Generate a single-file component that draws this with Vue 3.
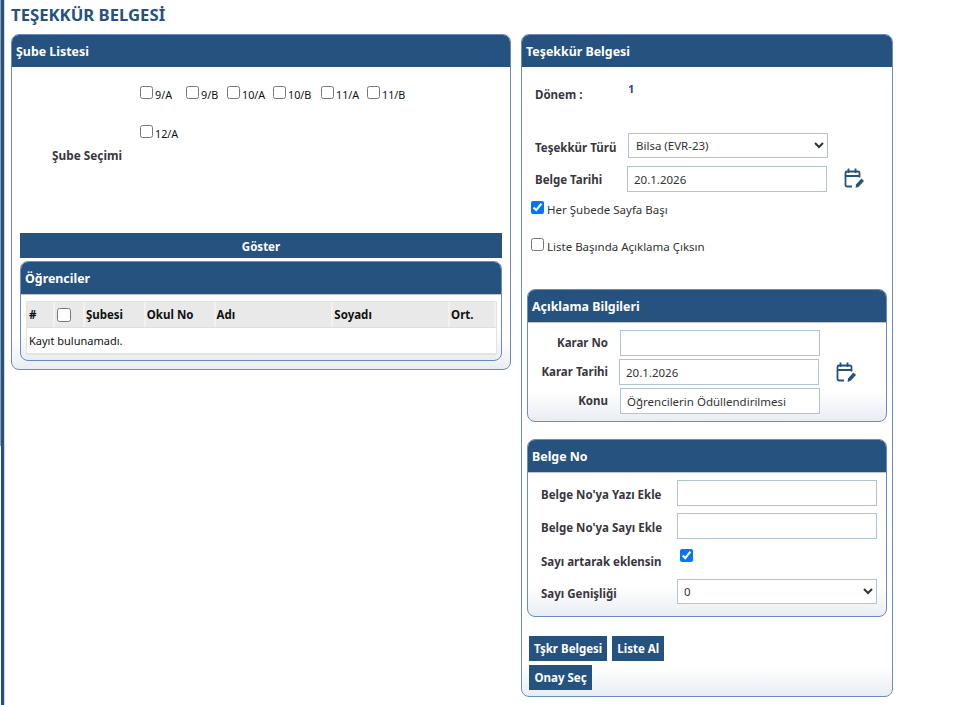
<script setup>
const row1 = [
  { name: '9/A', w: 46 },
  { name: '9/B', w: 41 },
  { name: '10/A', w: 46 },
  { name: '10/B', w: 48 },
  { name: '11/A', w: 46 },
  { name: '11/B', w: 46 }
]
const columns = [
  { name: 'Şubesi', w: 61 },
  { name: 'Okul No', w: 70 },
  { name: 'Adı', w: 118 },
  { name: 'Soyadı', w: 117 },
  { name: 'Ort.', w: 46 }
]
</script>

<template>
  <div class="shell">
    <div class="page">
      <h1 class="title">TEŞEKKÜR BELGESİ</h1>
      <div class="columns">
        <section class="panel left">
          <header class="head">Şube Listesi</header>
          <div class="branch">
            <div class="branch-label">Şube Seçimi</div>
            <div class="branch-list">
              <div class="check-row">
                <label v-for="r in row1" :key="r.name" class="chk" :style="{ width: r.w + 'px' }">
                  <input type="checkbox" /><span>{{ r.name }}</span>
                </label>
              </div>
              <div class="check-row second">
                <label class="chk"><input type="checkbox" /><span>12/A</span></label>
              </div>
            </div>
          </div>
          <button class="show">Göster</button>
          <section class="panel inner students">
            <header class="head">Öğrenciler</header>
            <div class="table-wrap">
              <div class="tr th">
                <div class="cell" style="width: 28px">#</div>
                <div class="cell center" style="width: 30px"><input type="checkbox" /></div>
                <div v-for="c in columns" :key="c.name" class="cell" :style="{ width: c.w + 'px' }">{{ c.name }}</div>
              </div>
              <div class="empty">Kayıt bulunamadı.</div>
            </div>
          </section>
        </section>

        <section class="panel right">
          <header class="head">Teşekkür Belgesi</header>
          <div class="term">
            <span class="lbl term-lbl">Dönem :</span>
            <span class="term-val">1</span>
          </div>
          <div class="type-row">
            <span class="lbl w-type">Teşekkür Türü</span>
            <select class="ctl sel wide type-sel"><option>Bilsa (EVR-23)</option></select>
          </div>
          <div class="date-row">
            <span class="lbl w-date">Belge Tarihi</span>
            <input class="ctl wide" value="20.1.2026" />
            <svg class="cal" viewBox="0 0 20 20" fill="none" stroke="#25527f" stroke-width="1.8">
              <path d="M8 18.500H3A1.500 1.500 0 0 1 1.500 17V5A1.500 1.500 0 0 1 3 3.500h11A1.500 1.500 0 0 1 15.500 5V9.500" />
              <path d="M1.500 8h14M4.500 0.500v4.500M11.500 0.500v4.500" />
              <path d="M11.500 20l.7-3.700 5.300-5.800 2.500 2.400-5.300 5.800z" fill="#25527f" stroke="none" />
            </svg>
          </div>
          <label class="opt first"><input type="checkbox" checked /><span>Her Şubede Sayfa Başı</span></label>
          <label class="opt second"><input type="checkbox" /><span>Liste Başında Açıklama Çıksın</span></label>

          <section class="panel inner desc">
            <header class="head">Açıklama Bilgileri</header>
            <div class="desc-body">
              <div class="d-row">
                <span class="lbl d-lbl">Karar No</span>
                <input class="ctl d-ctl" />
              </div>
              <div class="d-row shift">
                <span class="lbl d-lbl">Karar Tarihi</span>
                <input class="ctl d-ctl" value="20.1.2026" />
                <svg class="cal" viewBox="0 0 20 20" fill="none" stroke="#25527f" stroke-width="1.8">
                  <path d="M8 18.500H3A1.500 1.500 0 0 1 1.500 17V5A1.500 1.500 0 0 1 3 3.500h11A1.500 1.500 0 0 1 15.500 5V9.500" />
                  <path d="M1.500 8h14M4.500 0.500v4.500M11.500 0.500v4.500" />
                  <path d="M11.500 20l.7-3.700 5.300-5.800 2.500 2.400-5.300 5.800z" fill="#25527f" stroke="none" />
                </svg>
              </div>
              <div class="d-row">
                <span class="lbl d-lbl">Konu</span>
                <input class="ctl d-ctl" value="Öğrencilerin Ödüllendirilmesi" />
              </div>
            </div>
          </section>

          <section class="panel inner no">
            <header class="head">Belge No</header>
            <div class="no-body">
              <div class="n-row">
                <span class="lbl n-lbl">Belge No'ya Yazı Ekle</span>
                <input class="ctl n-ctl" />
              </div>
              <div class="n-row">
                <span class="lbl n-lbl">Belge No'ya Sayı Ekle</span>
                <input class="ctl n-ctl" />
              </div>
              <div class="n-row chk-row">
                <span class="lbl n-lbl">Sayı artarak eklensin</span>
                <input type="checkbox" checked class="n-chk" />
              </div>
              <div class="n-row">
                <span class="lbl n-lbl">Sayı Genişliği</span>
                <select class="ctl sel n-ctl n-sel"><option>0</option></select>
              </div>
            </div>
          </section>

          <div class="actions">
            <button class="btn">Tşkr Belgesi</button>
            <button class="btn">Liste Al</button>
            <button class="btn">Onay Seç</button>
          </div>
        </section>
      </div>
    </div>
  </div>
</template>

<style scoped>
.shell {
  width: 955px;
  height: 705px;
  overflow: hidden;
  padding-left: 1px;
  box-sizing: border-box;
  background: linear-gradient(to bottom, #8fa0b5 446px, #fff 446px);
}
.page {
  box-sizing: border-box;
  height: 705px;
  padding-left: 6px;
  border-left: 3px solid #25527f;
  box-shadow: inset 1px 0 0 #d8d8d8;
  font-family: "Noto Sans", "Open Sans", sans-serif;
  font-size: 11.5px;
  color: #222;
  background: #fff;
}
.title {
  margin: 0;
  height: 34px;
  padding: 4px 0 0 1px;
  box-sizing: border-box;
  font-size: 16.700px;
  line-height: 21px;
  font-weight: 700;
  color: #25527f;
}
.columns {
  display: flex;
  align-items: flex-start;
  gap: 10px;
  margin-left: 1px;
}
.panel {
  box-sizing: border-box;
  border: 1px solid #6a8cc0;
  border-radius: 8px;
  background: linear-gradient(to bottom, #fff calc(100% - 30px), #e9edf3 100%);
  overflow: hidden;
}
.head {
  height: 32px;
  padding-left: 4px;
  background: #25527f;
  color: #fff;
  font-size: 12.4px;
  font-weight: 700;
  line-height: 34px;
}
.left { width: 500px; height: 336px; }
.right { width: 372px; height: 663px; }
.inner .head { border-bottom: 1px solid #bfc4cb; }

.branch {
  display: flex;
  height: 166px;
  box-sizing: border-box;
}
.branch-label {
  width: 128px;
  padding: 80px 18px 0 0;
  box-sizing: border-box;
  text-align: right;
  font-size: 11.800px;
  font-weight: 700;
  color: #3a3640;
}
.check-row { display: flex; padding-top: 19px; height: 39px; box-sizing: border-box; }
.chk { display: flex; align-items: center; height: 13px; font-size: 10.800px; color: #111; }
.chk input, .table-wrap input, .opt input, .n-chk { margin: 0; }
.chk input { width: 13px; height: 13px; }
.chk span { margin-left: 2px; padding-top: 3px; white-space: nowrap; }

.show {
  display: block;
  width: 482px;
  height: 25px;
  margin: 0 0 0 8px;
  padding: 1px 0 0;
  border: 0;
  background: #25527f;
  color: #fff;
  font: 700 11.5px "Noto Sans", sans-serif;
}
.students {
  width: 482px;
  height: 100px;
  margin: 3px 0 0 8px;
}
.table-wrap {
  margin: 6px 4px 0 5px;
  border: 1px solid #e3e3e3;
  background: #fff;
}
.tr { display: flex; }
.th { background: #e9e9e9; height: 25px; border-bottom: 1px solid #dedede; }
.cell {
  box-sizing: border-box;
  border-right: 2px solid #f2f2f2;
  padding-left: 1px;
  font-weight: 700;
  line-height: 25px;
  color: #111;
}
.cell:first-child { padding-left: 2px; }
.center { display: flex; align-items: center; padding-left: 1px; }
.center input { width: 14px; height: 14px; margin-left: 1px; }
.empty { height: 25px; line-height: 25px; padding-left: 2px; font-size: 11px; color: #111; border-bottom: 1px solid #e3e3e3; }

.lbl { font-weight: 700; color: #3a3640; white-space: nowrap; }
.term { display: flex; height: 66px; padding: 20px 0 0 13px; box-sizing: border-box; }
.term-lbl { width: 93px; }
.term-val { margin-top: -6px; font-size: 11px; font-weight: 700; color: #25527f; }
.ctl {
  box-sizing: border-box;
  height: 26px;
  border: 1px solid #b3c3d6;
  border-radius: 0;
  background: #fff;
  padding: 0 6px;
  font: 11.5px "Noto Sans", sans-serif;
  color: #333;
  outline: none;
}
.wide { width: 200px; }
.sel { align-self: flex-start; height: 25px; }
.type-sel { padding: 0 3px; }
.n-sel { padding: 0 2px; }
.type-row, .date-row { display: flex; align-items: center; padding-left: 13px; }
.type-row { height: 26px; }
.w-type { width: 93px; padding-top: 2px; }
.date-row { height: 26px; margin-top: 7px; }
.w-date { width: 92px; }
.cal { width: 20px; height: 20px; margin-left: 17px; flex: none; }
.date-row .cal { margin-top: -3px; }
.opt { display: flex; align-items: center; margin-left: 9px; height: 14px; color: #333; }
.opt input { width: 13px; height: 13px; margin-top: -3px; }
.opt span { margin-left: 3px; }
.opt.first { margin-top: 10px; }
.opt.second { margin-top: 23px; }

.desc { width: 360px; height: 133px; margin: 36px 0 0 5px; }
.desc-body { padding-top: 7px; }
.d-row { display: flex; align-items: center; height: 26px; margin-bottom: 3px; }
.d-lbl { width: 80px; text-align: right; margin-right: 12px; padding-bottom: 2px; }
.shift .d-lbl { margin-right: 11px; }
.d-ctl { width: 200px; }

.no { width: 360px; height: 178px; margin: 17px 0 0 5px; }
.no-body { padding: 7px 0 0 13px; }
.n-row { display: flex; align-items: center; height: 26px; margin-bottom: 7px; }
.n-lbl { width: 136px; padding-top: 2px; }
.n-ctl { width: 200px; }
.chk-row .n-lbl { padding-top: 4px; }
.n-chk { width: 13px; height: 13px; margin: -7px 0 0 3px; }

.actions {
  display: flex;
  flex-wrap: wrap;
  gap: 4px 5px;
  margin: 19px 0 0 7px;
  width: 200px;
}
.btn {
  height: 25px;
  padding: 0 5px;
  border: 0;
  background: #25527f;
  color: #fff;
  font: 700 11.5px "Noto Sans", sans-serif;
}
.btn:last-child { width: 63px; }
</style>
